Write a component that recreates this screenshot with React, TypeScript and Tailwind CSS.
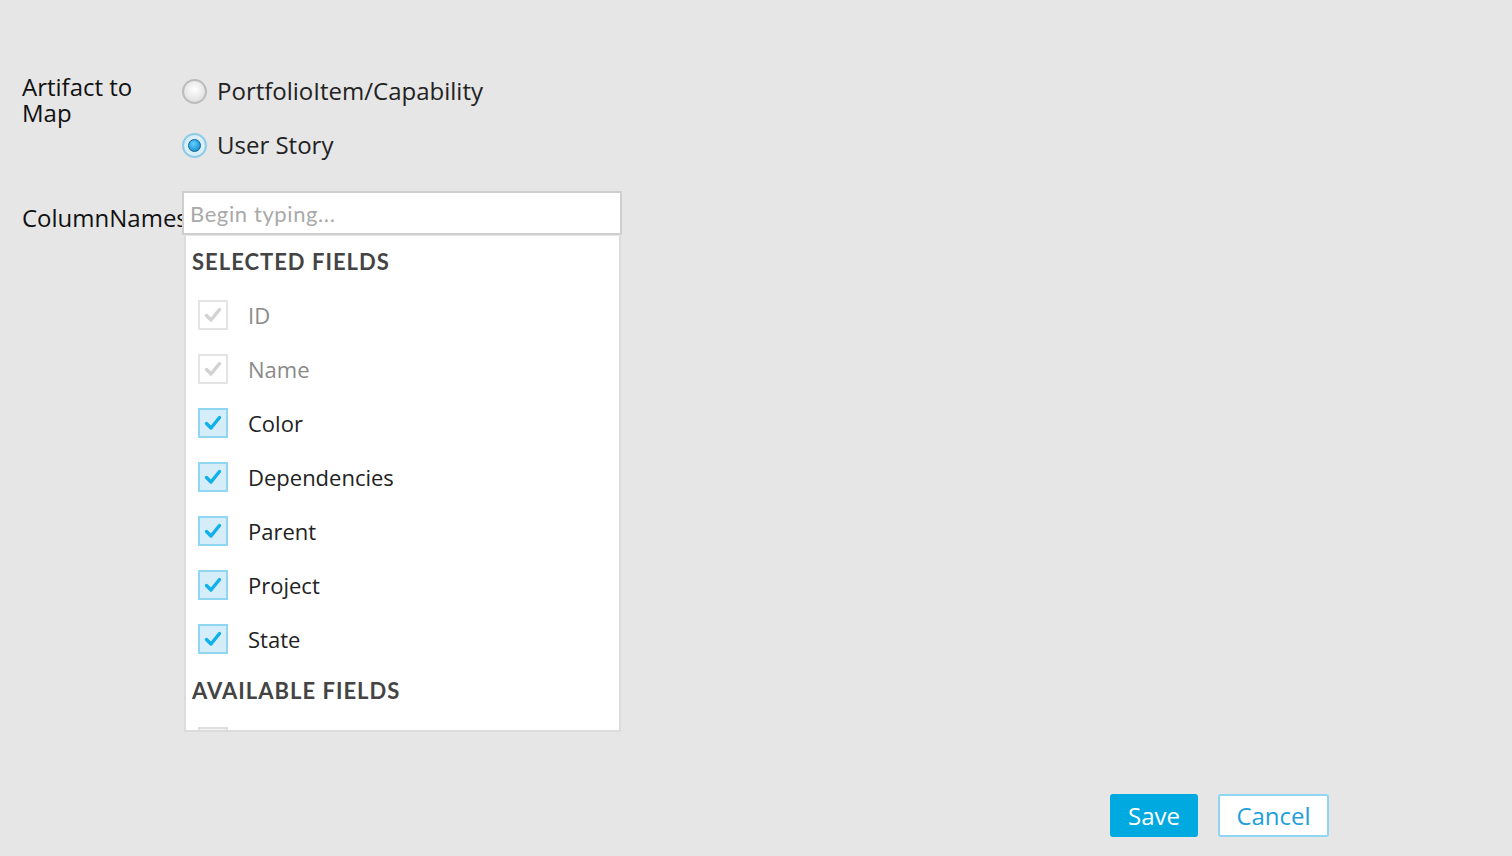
import React from "react";

const fields = [
  { name: "ID", disabled: true },
  { name: "Name", disabled: true },
  { name: "Color" },
  { name: "Dependencies" },
  { name: "Parent" },
  { name: "Project" },
  { name: "State" },
];

function Check({ disabled }: { disabled?: boolean }) {
  return (
    <div
      className={
        disabled
          ? "w-[30px] h-[30px] border-2 border-[#e4e4e4] bg-white flex items-center justify-center"
          : "w-[30px] h-[30px] border-2 border-[#8fd6f2] bg-[#d4edf9] flex items-center justify-center"
      }
    >
      <svg width="20" height="20" viewBox="0 0 20 20">
        <polyline
          points="3.5,10.5 8,15 16.5,4.5"
          fill="none"
          stroke={disabled ? "#d2d2d2" : "#12b0ea"}
          strokeWidth="3.4"
          strokeLinecap="round"
          strokeLinejoin="round"
        />
      </svg>
    </div>
  );
}

function Radio({ checked }: { checked?: boolean }) {
  return checked ? (
    <div className="w-[25px] h-[25px] rounded-full border-2 border-[#8ccbe6] bg-[#d8eef8] flex items-center justify-center">
      <div className="w-[13px] h-[13px] rounded-full bg-[radial-gradient(circle_at_40%_35%,#5fd0ff,#0a7fc4)] border border-[#0f5f91]" />
    </div>
  ) : (
    <div className="w-[25px] h-[25px] rounded-full border-2 border-[#bcbcbc] bg-[radial-gradient(circle_at_50%_40%,#ffffff,#d6d6d6)]" />
  );
}

export default function App() {
  return (
    <div
      className="min-h-screen w-full bg-[#e6e6e6] flex flex-col"
      style={{ fontFamily: '"Open Sans", "Noto Sans", sans-serif' }}
    >
      <div className="pt-[72px] pl-[22px]">
        {/* Artifact to Map */}
        <div className="flex">
          <div className="w-[160px] text-[24px] leading-[26px] text-[#111] pt-[2px]">
            <div>Artifact to</div>
            <div>Map</div>
          </div>
          <div className="flex flex-col gap-[22px] pt-[3px]">
            <label className="flex items-center gap-[10px]">
              <Radio />
              <span className="text-[24px] leading-[32px] text-[#222]">PortfolioItem/Capability</span>
            </label>
            <label className="flex items-center gap-[10px]">
              <Radio checked />
              <span className="text-[24px] leading-[32px] text-[#222]">User Story</span>
            </label>
          </div>
        </div>

        {/* ColumnNames */}
        <div className="flex mt-[30px]">
          <div className="w-[160px] text-[24px] leading-[26px] text-[#111] pt-[14px] whitespace-nowrap">
            ColumnNames
          </div>
          <div className="relative z-10 flex flex-col w-[440px]">
            <div className="h-[44px] border-2 border-[#cfcfcf] bg-white flex items-center px-[6px]">
              <span
                className="text-[22px] tracking-[0.6px] text-[#a9a9a9]"
                style={{ fontFamily: 'Lato, "Open Sans", sans-serif' }}
              >
                Begin typing...
              </span>
            </div>
            <div className="ml-[2px] mt-[1px] w-[437px] h-[496px] overflow-hidden border-2 border-t-0 border-[#dcdcdc] bg-white">
              <div
                className="pl-[6px] pt-[12px] text-[22px] leading-[28px] font-bold tracking-[1px] text-[#444]"
                style={{ fontFamily: 'Lato, "Open Sans", sans-serif' }}
              >
                SELECTED FIELDS
              </div>
              <div className="flex flex-col pt-[12px]">
                {fields.map((f) => (
                  <div key={f.name} className="flex items-center h-[54px] pl-[12px]">
                    <Check disabled={f.disabled} />
                    <span
                      className={
                        f.disabled
                          ? "ml-[20px] text-[22px] text-[#8a8a8a]"
                          : "ml-[20px] text-[22px] text-[#222]"
                      }
                    >
                      {f.name}
                    </span>
                  </div>
                ))}
              </div>
              <div
                className="pl-[6px] pt-[11px] text-[22px] leading-[28px] font-bold tracking-[1px] text-[#444]"
                style={{ fontFamily: 'Lato, "Open Sans", sans-serif' }}
              >
                AVAILABLE FIELDS
              </div>
              <div className="pl-[12px] pt-[22px]">
                <div className="w-[30px] h-[30px] border-2 border-[#dedede] bg-[#f4f4f4]" />
              </div>
            </div>
          </div>
        </div>
      </div>

      <div className="mt-auto flex justify-end gap-[20px] pr-[183px] pb-[19px]">
        <button className="h-[43px] w-[88px] rounded-[3px] bg-[#00a9e0] text-white text-[24px] leading-none">
          Save
        </button>
        <button className="h-[43px] w-[111px] rounded-[3px] border-2 border-[#8fd6f2] bg-white text-[#1e9fdc] text-[24px] leading-none">
          Cancel
        </button>
      </div>
    </div>
  );
}
